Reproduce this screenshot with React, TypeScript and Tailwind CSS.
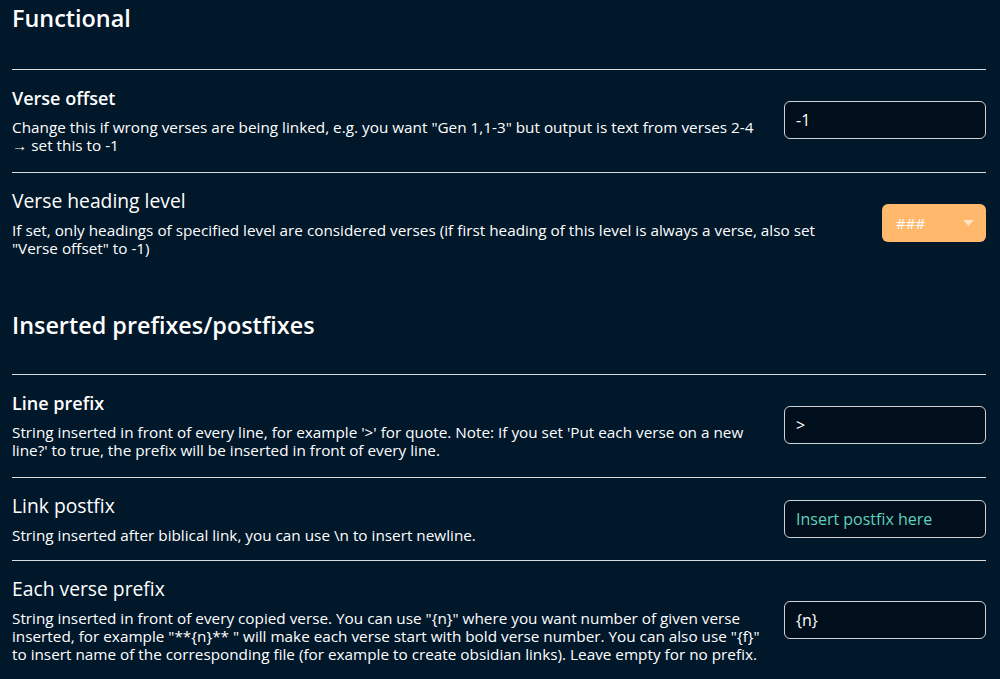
import React from "react";

const font = { fontFamily: "'Open Sans', 'Noto Sans', sans-serif" };

function Row({
  title,
  bold,
  desc,
  control,
  tight,
}: {
  title: string;
  bold?: boolean;
  desc: React.ReactNode;
  control: React.ReactNode;
  tight?: boolean;
}) {
  return (
    <div className={`flex items-center gap-[20px] pt-[16px] border-t border-[#dcdcdc] ${tight ? "pb-[16px]" : "pb-[18px]"}`}>
      <div className="flex-1 min-w-0">
        <div
          className={`leading-[24px] text-white ${bold ? "text-[18px] font-semibold" : "text-[19.3px] font-normal"}`}
        >
          {title}
        </div>
        <div className="text-[15.3px] leading-[18px] text-white mt-[8px]">{desc}</div>
      </div>
      <div className="shrink-0">{control}</div>
    </div>
  );
}

function TextInput({ value, placeholder }: { value?: string; placeholder?: string }) {
  return (
    <div className="h-[38px] w-[202px] rounded-[6px] border border-[#cfd3d6] bg-[#010f1c] flex items-center px-[11px] text-[16px]">
      {value ? (
        <span className="text-white">{value}</span>
      ) : (
        <span className="text-[#5fd1bf]">{placeholder}</span>
      )}
    </div>
  );
}

function Dropdown() {
  return (
    <div className="h-[38px] w-[104px] rounded-[6px] bg-[#ffb86c] flex items-center justify-between pl-[14px] pr-[12px] text-[15px] text-white">
      <span>###</span>
      <svg width="11" height="6" viewBox="0 0 11 6">
        <path d="M0 0 L11 0 L5.5 6 Z" fill="#ffe2c2" />
      </svg>
    </div>
  );
}

export default function App() {
  return (
    <div className="w-[1000px] h-[679px] overflow-hidden bg-[#01172a] pl-[12px] pr-[14px]" style={font}>
      <h2 className="text-[23.4px] leading-[36px] font-semibold text-white mb-[33px]">Functional</h2>
      <Row
        title="Verse offset"
        bold
        desc={<>Change this if wrong verses are being linked, e.g. you want "Gen 1,1-3" but output is text from verses 2-4 → set this to -1</>}
        control={<TextInput value="-1" />}
      />
      <Row
        title="Verse heading level"
        desc={<>If set, only headings of specified level are considered verses (if first heading of this level is always a verse, also set "Verse offset" to -1)</>}
        control={<Dropdown />}
      />
      <h2 className="text-[23.4px] leading-[36px] font-semibold text-white mt-[32px] mb-[31px]">Inserted prefixes/postfixes</h2>
      <Row
        title="Line prefix"
        bold
        desc={<>String inserted in front of every line, for example '&gt;' for quote. Note: If you set 'Put each verse on a new line?' to true, the prefix will be inserted in front of every line.</>}
        control={<TextInput value=">" />}
      />
      <Row
        title="Link postfix"
        tight
        desc={<>String inserted after biblical link, you can use \n to insert newline.</>}
        control={<TextInput placeholder="Insert postfix here" />}
      />
      <Row
        title="Each verse prefix"
        desc={<>String inserted in front of every copied verse. You can use "{"{n}"}" where you want number of given verse inserted, for example "**{"{n}"}** " will make each verse start with bold verse number. You can also use "{"{f}"}" to insert name of the corresponding file (for example to create obsidian links). Leave empty for no prefix.</>}
        control={<TextInput value="{n}" />}
      />
    </div>
  );
}
